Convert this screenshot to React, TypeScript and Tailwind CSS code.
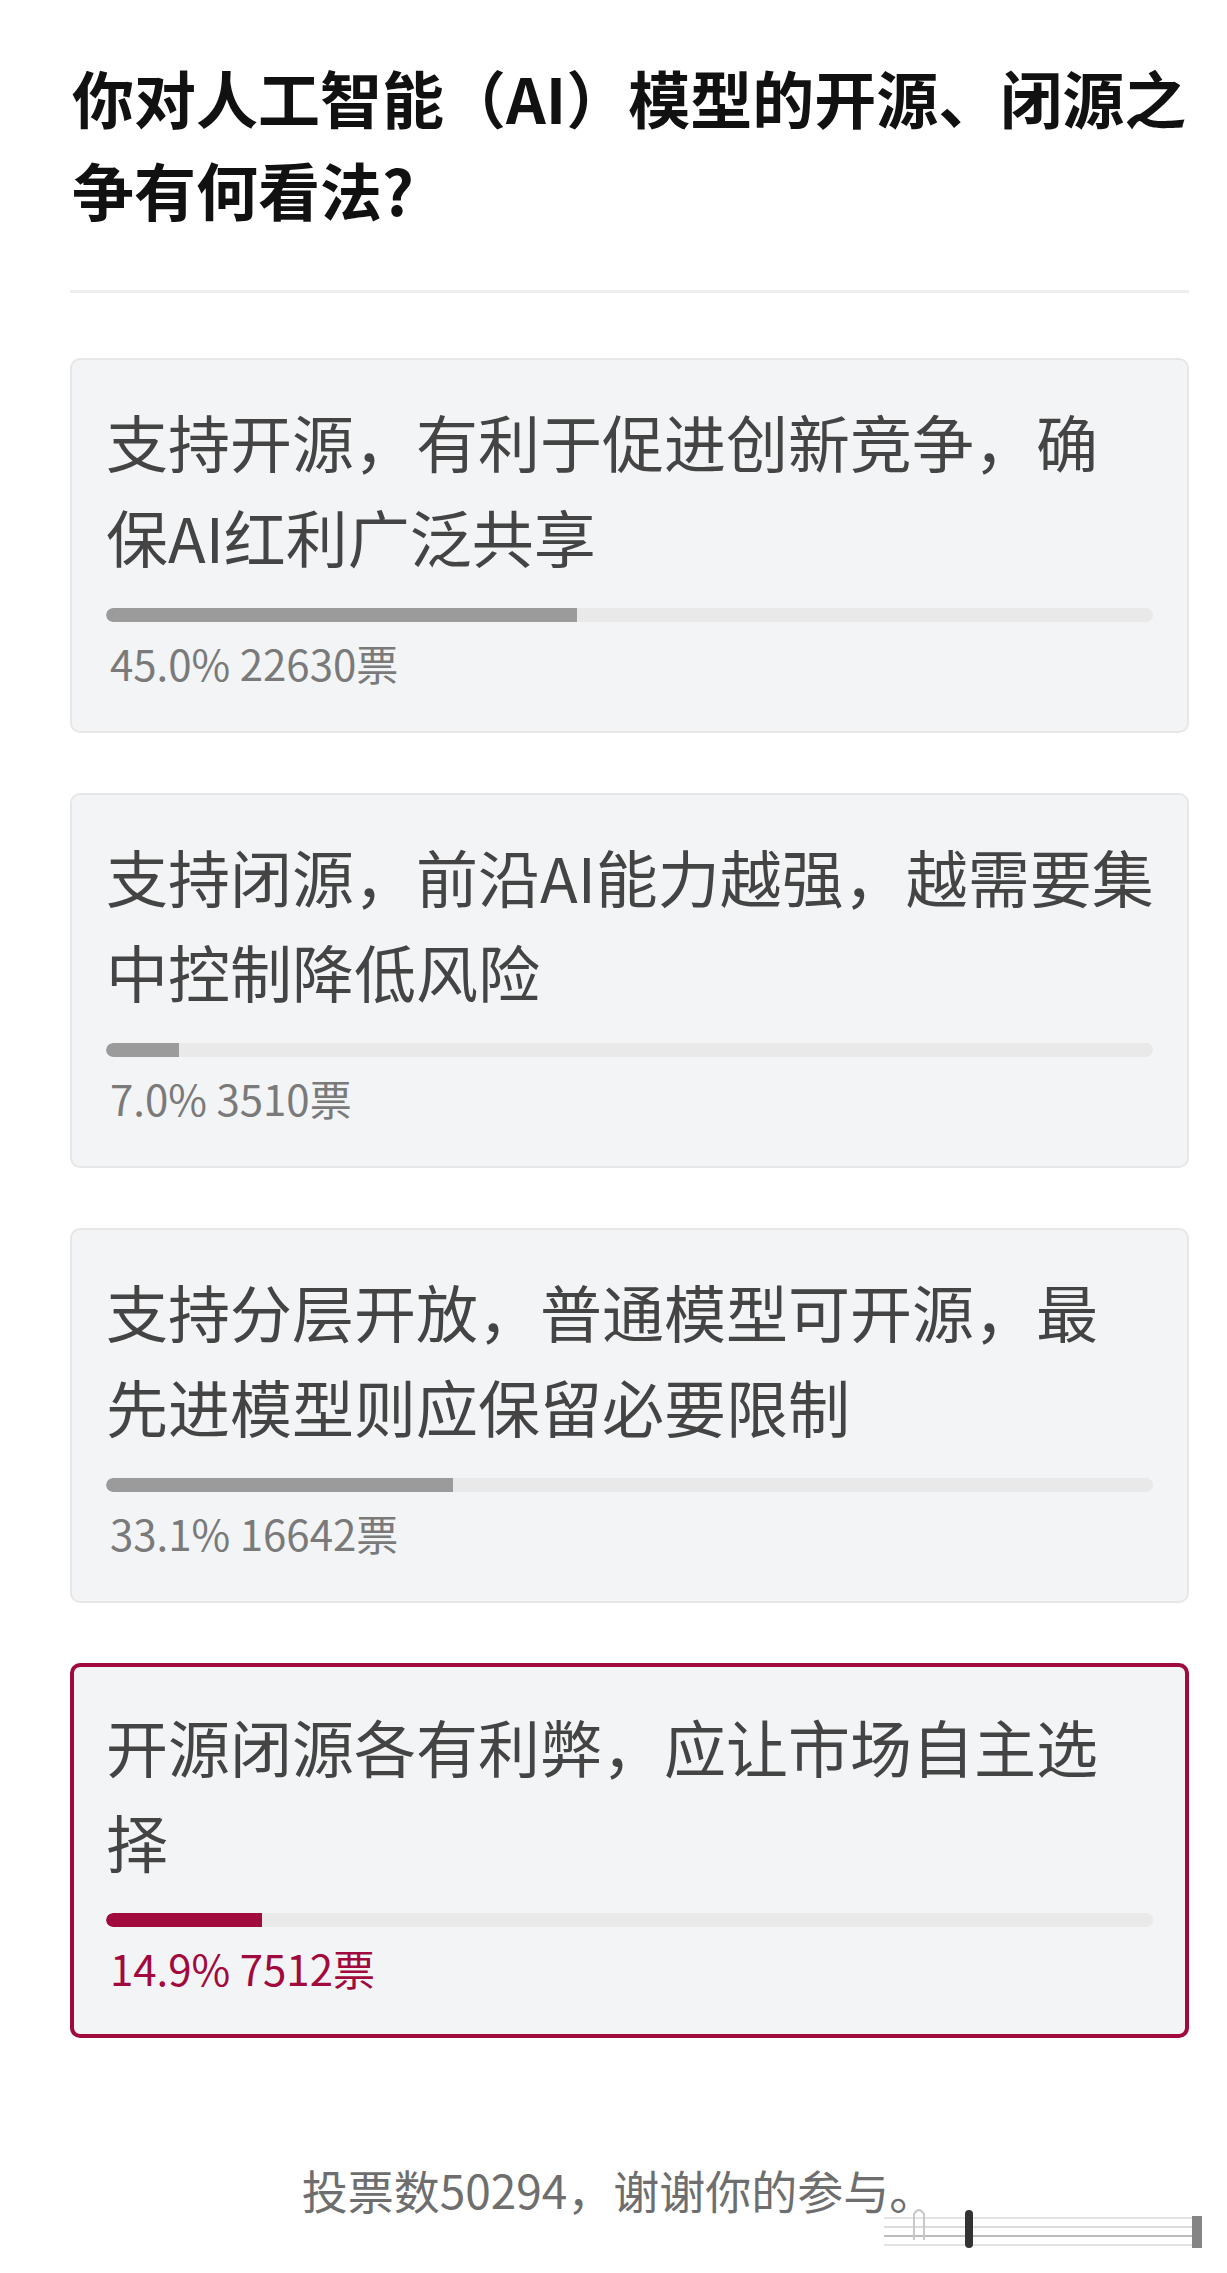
import React from "react";

type Opt = {
  lines: string[];
  pct: number;
  label: string;
  selected?: boolean;
};

const options: Opt[] = [
  { lines: ["支持开源，有利于促进创新竞争，确", "保AI红利广泛共享"], pct: 45.0, label: "45.0% 22630票" },
  { lines: ["支持闭源，前沿AI能力越强，越需要集", "中控制降低风险"], pct: 7.0, label: "7.0% 3510票" },
  { lines: ["支持分层开放，普通模型可开源，最", "先进模型则应保留必要限制"], pct: 33.1, label: "33.1% 16642票" },
  { lines: ["开源闭源各有利弊，应让市场自主选", "择"], pct: 14.9, label: "14.9% 7512票", selected: true },
];

function Card({ o }: { o: Opt }) {
  const sel = !!o.selected;
  return (
    <div
      className={
        sel
          ? "rounded-[10px] border-[4px] border-[#a10a3c] bg-[#f3f4f5] px-[32px] pt-[32px] pb-[38px]"
          : "rounded-[10px] border-2 border-[#e7e7e7] bg-[#f3f4f5] px-[34px] pt-[34px] pb-[40px]"
      }
    >
      <div className="text-[62px] leading-[95px] text-[#444444]">
        {o.lines.map((l, i) => (
          <div key={i} className="whitespace-nowrap">
            {l}
          </div>
        ))}
      </div>
      <div className="mt-[24px] h-[14px] w-full rounded-full bg-[#e9e9e9] overflow-hidden">
        <div
          className={sel ? "h-full rounded-l-full bg-[#a10a3c]" : "h-full rounded-l-full bg-[#9b9b9b]"}
          style={{ width: `${o.pct}%` }}
        />
      </div>
      <div
        className={
          sel
            ? "mt-[13px] text-[42px] leading-[56px] text-[#a10a3c] pl-[4px]"
            : "mt-[13px] text-[42px] leading-[56px] text-[#7a7a7a] pl-[4px]"
        }
      >
        {o.label}
      </div>
    </div>
  );
}

export default function App() {
  return (
    <div
      className="relative w-[1227px] min-h-[2273px] bg-white pl-[70px] pr-[38px] pt-[51px]"
      style={{ fontFamily: '"Noto Sans CJK SC", "Noto Sans", sans-serif' }}
    >
      <h1 className="pl-[2px] text-[62px] leading-[92px] font-bold text-[#111111]">
        <div className="whitespace-nowrap">你对人工智能（AI）模型的开源、闭源之</div>
        <div className="whitespace-nowrap">争有何看法?</div>
      </h1>
      <div className="mt-[55px] h-[3px] bg-[#eeeeee]" />
      <div className="mt-[65px] flex flex-col gap-[60px]">
        {options.map((o, i) => (
          <Card key={i} o={o} />
        ))}
      </div>
      <div className="mt-[119px] mr-[22px] text-center text-[46px] leading-[64px] text-[#6e6e6e]">
        投票数50294，谢谢你的参与。
      </div>
      <svg
        className="absolute left-[880px] top-[2200px]"
        width="340"
        height="52"
        viewBox="0 0 340 52"
      >
        <line x1="4" y1="18" x2="312" y2="18" stroke="#e4e4e4" strokeWidth="2" />
        <line x1="4" y1="27" x2="312" y2="27" stroke="#dcdcdc" strokeWidth="2" />
        <line x1="4" y1="36" x2="312" y2="36" stroke="#bdbdbd" strokeWidth="2" />
        <line x1="4" y1="45" x2="312" y2="45" stroke="#e4e4e4" strokeWidth="2" />
        <path d="M34 40 V14 Q39 6 44 14 V40" fill="none" stroke="#c8c8c8" strokeWidth="2" />
        <rect x="85" y="10" width="8" height="38" rx="4" fill="#333333" />
        <rect x="312" y="16" width="10" height="32" fill="#333333" opacity="0.6" />
      </svg>
    </div>
  );
}
